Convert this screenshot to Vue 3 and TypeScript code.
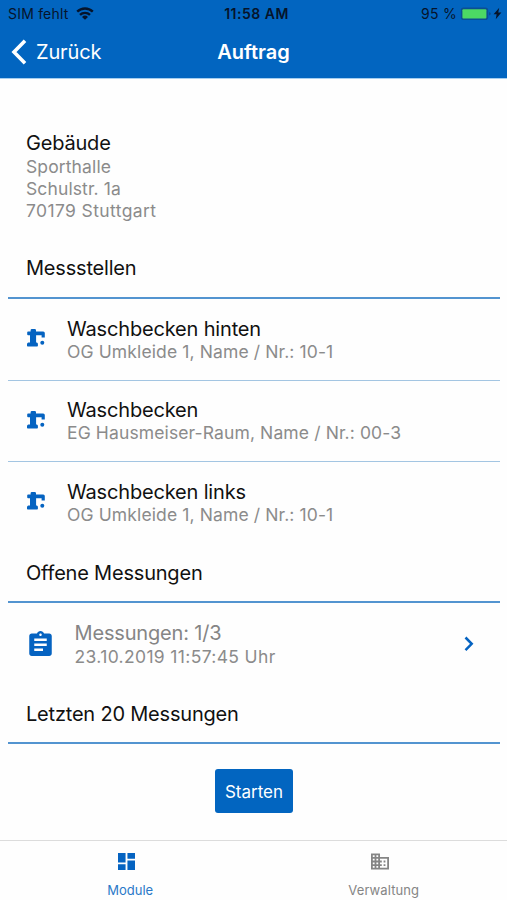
<script setup lang="ts">
interface Station {
  title: string
  detail: string
}

const address: string[] = ['Sporthalle', 'Schulstr. 1a', '70179 Stuttgart']

const stations: Station[] = [
  { title: 'Waschbecken hinten', detail: 'OG Umkleide 1, Name / Nr.: 10-1' },
  { title: 'Waschbecken', detail: 'EG Hausmeiser-Raum, Name / Nr.: 00-3' },
  { title: 'Waschbecken links', detail: 'OG Umkleide 1, Name / Nr.: 10-1' },
]
</script>

<template>
  <div class="screen">
    <header class="header">
      <div class="status">
        <div class="status-left">
          <span class="carrier">SIM fehlt</span>
          <svg class="wifi" viewBox="0 0 18 13" fill="none" stroke="#06142b" stroke-width="2.4">
            <path d="M1.2 4.6a11.2 11.2 0 0 1 15.6 0" />
            <path d="M4 7.9a7.1 7.1 0 0 1 10 0" />
            <path d="M9 12.8 6 9.9a4.3 4.3 0 0 1 6 0z" fill="#06142b" stroke="none" />
          </svg>
        </div>
        <span class="time">11:58 AM</span>
        <div class="status-right">
          <span class="percent">95 %</span>
          <svg class="battery" viewBox="0 0 32 14">
            <rect x="0.8" y="0.6" width="27.4" height="12.4" rx="2.8" fill="#0b4f93" />
            <rect x="2.4" y="2.2" width="24" height="9.4" rx="1" fill="#4cd964" />
            <path d="M29.4 5v3.6c1.6-.6 1.6-3 0-3.6z" fill="#0b3f78" />
          </svg>
          <svg class="bolt" viewBox="0 0 8 12"><path d="M5.6.6.4 6.8h2.8L2.4 11.4l5.2-6.4H4.7z" fill="#06142b" /></svg>
        </div>
      </div>
      <nav class="nav">
        <button class="back" type="button">
          <svg class="back-icon" viewBox="0 0 16 26"><path d="M14 1.8 3 13l11 11.2" fill="none" stroke="#fff" stroke-width="3.6" /></svg>
          <span>Zurück</span>
        </button>
        <h1 class="nav-title">Auftrag</h1>
      </nav>
    </header>

    <main class="content">
      <section class="building">
        <h2 class="heading building-title">Gebäude</h2>
        <p v-for="line in address" :key="line" class="detail">{{ line }}</p>
      </section>

      <h2 class="heading section-title stations-title">Messstellen</h2>
      <ul class="stations">
        <li v-for="(station, index) in stations" :key="index" class="station">
          <svg class="tap" viewBox="0 0 18 18" fill="#0563c1">
            <path d="M3.6 1.3Q3.6 0 4.9 0h2.8Q9 0 9 1.3v1.1h7.2q1.6 0 1.6 1.6v4.4h-3.2V6.2H9.1v7.2h.7q1.1.2 1.1 1.6v1.8q0 .8-.8.8H.8q-.8 0-.8-.8V15q.2-1.4 1.4-1.6H3V6.2H1.1Q.2 6.2.2 5.3V3.4q0-1 .9-1h2.5z" />
            <circle cx="15.3" cy="13.8" r="2" />
          </svg>
          <div class="texts">
            <p class="title">{{ station.title }}</p>
            <p class="detail">{{ station.detail }}</p>
          </div>
        </li>
      </ul>

      <h2 class="heading section-title open-title">Offene Messungen</h2>
      <div class="measurement">
        <svg class="clipboard" viewBox="3 1 18 20" fill="#0563c1">
          <path d="M19 3h-4.18C14.4 1.84 13.3 1 12 1c-1.3 0-2.4.84-2.82 2H5c-1.1 0-2 .9-2 2v14c0 1.1.9 2 2 2h14c1.1 0 2-.9 2-2V5c0-1.1-.9-2-2-2zm-7 0c.55 0 1 .45 1 1s-.45 1-1 1-1-.45-1-1 .45-1 1-1zm2 14H7v-2h7v2zm3-4H7v-2h10v2zm0-4H7V7h10v2z" />
        </svg>
        <div class="texts">
          <p class="title muted">Messungen: 1/3</p>
          <p class="detail timestamp">23.10.2019 11:57:45 Uhr</p>
        </div>
        <svg class="chevron" viewBox="0 0 10 16"><path d="m1.5 1.5 6.2 6.3-6.2 6.3" fill="none" stroke="#0563c1" stroke-width="2.5" /></svg>
      </div>

      <h2 class="heading section-title last-title">Letzten 20 Messungen</h2>
      <button class="start" type="button">Starten</button>
    </main>

    <footer class="tabs">
      <div class="tab active">
        <svg class="tab-icon" viewBox="3 3 18 18" fill="#0563c1"><path d="M3 13h8V3H3v10zm0 8h8v-6H3v6zm10 0h8V11h-8v10zm0-18v6h8V3h-8z" /></svg>
        <span>Module</span>
      </div>
      <div class="tab">
        <svg class="tab-icon building-icon" viewBox="2 3 20 18" fill="#858585"><path d="M12 7V3H2v18h20V7H12zM6 19H4v-2h2v2zm0-4H4v-2h2v2zm0-4H4V9h2v2zm0-4H4V5h2v2zm4 12H8v-2h2v2zm0-4H8v-2h2v2zm0-4H8V9h2v2zm0-4H8V5h2v2zm10 12h-8v-2h2v-2h-2v-2h2v-2h-2V9h8v10zm-2-8h-2v2h2v-2zm0 4h-2v2h2v-2z" /></svg>
        <span class="tab-wide">Verwaltung</span>
      </div>
    </footer>
  </div>
</template>

<style>
body {
  background: #fefefe;
}
</style>

<style scoped>
.screen {
  display: flex;
  flex-direction: column;
  height: 900px;
  overflow: hidden;
  background: #fefefe;
  font-family: Inter, "Liberation Sans", sans-serif;
  color: #111;
}
h1, h2, p, ul {
  margin: 0;
  padding: 0;
  font-weight: 400;
  white-space: nowrap;
}
ul {
  list-style: none;
}
button {
  border: 0;
  background: none;
  padding: 0;
  color: #fff;
  font-family: inherit;
}
.header {
  box-sizing: border-box;
  height: 79px;
  flex: none;
  background: #0265c0;
  border-bottom: 1px solid #a5cef0;
}
.status {
  display: grid;
  grid-template-columns: 1fr auto 1fr;
  align-items: center;
  height: 27px;
  padding: 0 5px 0 8px;
  font-size: 14px;
  color: #06142b;
}
.status-left, .status-right {
  display: flex;
  align-items: center;
}
.status-right {
  justify-content: flex-end;
}
.carrier {
  letter-spacing: 0.2px;
}
.wifi {
  width: 18px;
  height: 13px;
  margin-left: 7px;
}
.time {
  font-weight: 600;
  font-size: 14px;
  letter-spacing: 0.5px;
  margin-left: 3px;
}
.battery {
  width: 32px;
  height: 14px;
  margin-left: 3px;
}
.bolt {
  width: 9px;
  height: 13px;
  margin-left: 1px;
}
.percent {
  letter-spacing: 0.3px;
}
.nav {
  display: grid;
  grid-template-columns: 1fr auto 1fr;
  align-items: center;
  height: 50px;
  padding: 0 11px;
}
.back {
  display: flex;
  align-items: center;
  gap: 9px;
  font-size: 20px;
  line-height: 24px;
  letter-spacing: -0.15px;
  padding-bottom: 1px;
}
.back-icon {
  width: 16px;
  height: 26px;
}
.nav-title {
  color: #fff;
  font-size: 20px;
  font-weight: 600;
}
.content {
  display: flex;
  flex-direction: column;
  flex: 1;
  padding: 0 7px 0 8px;
}
.building {
  padding: 51px 18px 0;
}
.heading {
  font-size: 20px;
  line-height: 26px;
  letter-spacing: -0.2px;
}
.detail {
  font-size: 17.5px;
  line-height: 22px;
  letter-spacing: 0.12px;
  color: #8b8b8b;
}
.building .detail:last-child {
  letter-spacing: 0.38px;
}
.section-title {
  box-sizing: border-box;
  padding-left: 18px;
  border-bottom: 2px solid #5394d0;
}
.stations-title {
  height: 77px;
  padding-top: 33px;
}
.station {
  box-sizing: border-box;
  display: flex;
  align-items: center;
  height: 81.5px;
  padding-left: 19px;
  border-bottom: 1px solid #a3c5e2;
}
.station:last-child {
  height: 80px;
  border-bottom: 0;
}
.tap {
  width: 18px;
  height: 18px;
  margin: 0 22px 2px 0;
}
.title {
  font-size: 20px;
  line-height: 25px;
  letter-spacing: -0.17px;
}
.station .title {
  padding-top: 1px;
  line-height: 24px;
}
.muted {
  color: #858585;
}
.timestamp {
  letter-spacing: 0.35px;
}
.open-title {
  height: 61px;
  padding-top: 18px;
}
.measurement {
  display: flex;
  align-items: center;
  height: 81px;
  padding: 1px 26px 0 20.5px;
}
.clipboard {
  width: 23px;
  height: 25px;
  margin: 0 23px 3px 0;
}
.chevron {
  width: 10px;
  height: 16px;
  margin: 0 0 1px auto;
}
.last-title {
  height: 59px;
  padding-top: 16px;
}
.start {
  align-self: center;
  width: 78px;
  height: 44px;
  margin-top: 25px;
  border-radius: 3px;
  background: #0265c0;
  font-size: 17px;
  padding-top: 1px;
}
.tabs {
  display: grid;
  grid-template-columns: 1fr 1fr;
  flex: none;
  box-sizing: border-box;
  height: 60px;
  border-top: 1px solid #dcdcdc;
  font-size: 13px;
  color: #858585;
}
.tab {
  display: flex;
  flex-direction: column;
  align-items: center;
  padding: 12px 0 0 7px;
  line-height: 16px;
}
.active {
  color: #2a79c8;
}
.tab-icon {
  width: 17px;
  height: 17px;
  margin: 0 7px 12px 0;
}
.building-icon {
  width: 18px;
}
.tab-wide {
  letter-spacing: 0.1px;
}
</style>
